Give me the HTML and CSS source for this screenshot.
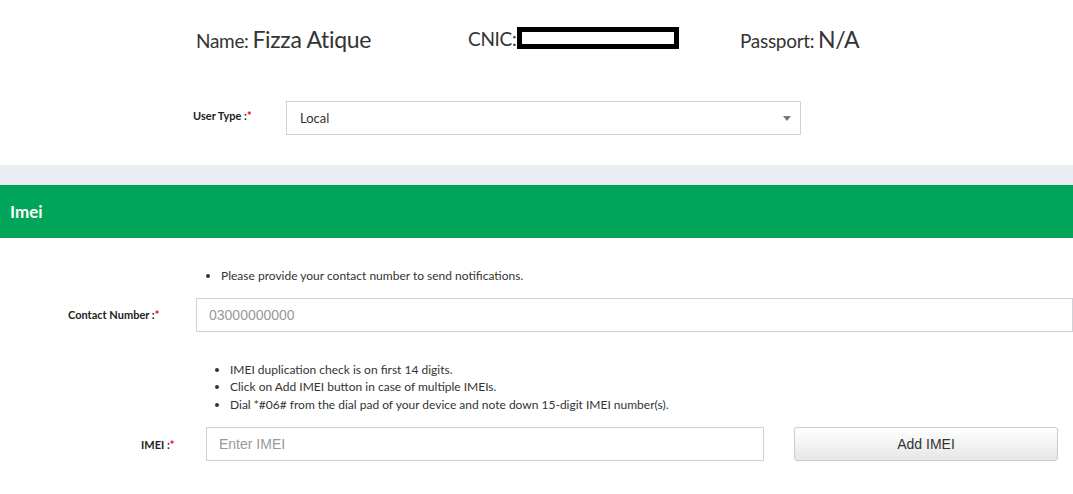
FILE: index.html
```html
<!DOCTYPE html>
<html lang="en">
<head>
  <meta charset="UTF-8" />
  <meta name="viewport" content="width=device-width, initial-scale=1.0"/>
  <title>IMEI Registration</title>
  <link rel="stylesheet" href="styles.css">
</head>
<body>
  <div class="info-row">
    <div class="info"><span class="info-key">Name:</span> <span class="info-val">Fizza Atique</span></div>
    <div class="info"><span class="info-key">CNIC:</span> <span class="redact"></span></div>
    <div class="info"><span class="info-key">Passport:</span> <span class="info-val">N/A</span></div>
  </div>

  <div class="row row-type">
    <label class="label">User Type :<span class="req">*</span></label>
    <div class="select">
      <span>Local</span>
      <span class="caret"></span>
    </div>
  </div>

  <div class="band"></div>
  <div class="section-head">Imei</div>

  <ul class="notes notes-contact">
    <li>Please provide your contact number to send notifications.</li>
  </ul>

  <div class="row row-contact">
    <label class="label">Contact Number :<span class="req">*</span></label>
    <input class="field" type="text" placeholder="03000000000">
  </div>

  <ul class="notes notes-imei">
    <li>IMEI duplication check is on first 14 digits.</li>
    <li>Click on Add IMEI button in case of multiple IMEIs.</li>
    <li>Dial *#06# from the dial pad of your device and note down 15-digit IMEI number(s).</li>
  </ul>

  <div class="row row-imei">
    <label class="label">IMEI :<span class="req">*</span></label>
    <input class="field" type="text" placeholder="Enter IMEI">
    <button class="btn">Add IMEI</button>
  </div>
</body>
</html>
```

FILE: styles.css
```css
body {
  margin: 0;
  font-family: Lato, "Open Sans", sans-serif;
  color: #333;
  background: #fff;
}
.info-row {
  display: grid;
  grid-template-columns: 272px 272px 272px;
  padding: 16px 0 0 196px;
  height: 45px;
  align-items: center;
}
.info {
  white-space: nowrap;
  letter-spacing: -0.3px;
}
.info-key {
  font-size: 19px;
  color: #333;
}
.info-val {
  font-size: 23px;
  color: #333;
}
.redact {
  display: inline-block;
  vertical-align: -3px;
  width: 152px;
  height: 12px;
  margin-left: -3px;
  border: 5px solid #000;
}
.row {
  display: grid;
  align-items: center;
}
.label {
  font-size: 11px;
  font-weight: bold;
  color: #222;
}
.req {
  color: #e00;
}
.row-type {
  grid-template-columns: 93px 515px;
  padding-left: 193px;
  margin-top: 40px;
}
.select {
  height: 32px;
  border: 1px solid #cfd3d8;
  display: flex;
  align-items: center;
  justify-content: space-between;
  padding: 0 9px 0 13px;
  font-size: 13px;
  color: #333;
}
.row-type .label {
  margin-top: -5px;
}
.caret {
  width: 0;
  height: 0;
  border-left: 4px solid transparent;
  border-right: 4px solid transparent;
  border-top: 5px solid #777;
}
.band {
  height: 20px;
  background: #eaedf2;
  margin-top: 30px;
}
.section-head {
  height: 53px;
  background: #00a559;
  color: #fff;
  font-size: 17px;
  font-weight: bold;
  line-height: 53px;
  padding-left: 10px;
}
.notes {
  margin: 0;
  font-size: 12px;
  color: #333;
  line-height: 17.5px;
}
.notes-contact {
  padding: 29px 0 0 221px;
}
.row-contact {
  grid-template-columns: 128px 877px;
  padding-left: 68px;
  margin-top: 13px;
}
.field {
  box-sizing: border-box;
  height: 34px;
  border: 1px solid #cfd3d8;
  font-family: Arial, "Liberation Sans", sans-serif;
  font-size: 14px;
  padding: 0 12px;
  color: #333;
}
.field::placeholder {
  color: #999;
}
.notes-imei {
  padding: 29px 0 0 230px;
}
.row-imei {
  grid-template-columns: 65px 558px 294px;
  padding-left: 141px;
  margin-top: 14px;
}
.row-imei .btn {
  margin-left: 30px;
}
.btn {
  box-sizing: border-box;
  height: 34px;
  border: 1px solid #ccc;
  border-radius: 3px;
  background: linear-gradient(#fff, #e6e6e6);
  font-family: Arial, "Liberation Sans", sans-serif;
  font-size: 14px;
  color: #333;
  cursor: pointer;
}
```
